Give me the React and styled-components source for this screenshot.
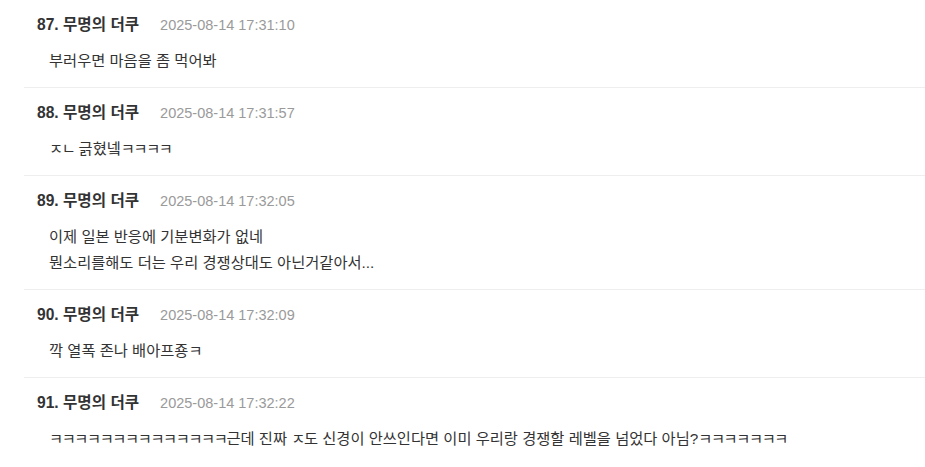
import React from "react";
import styled, { createGlobalStyle } from "styled-components";

const Global = createGlobalStyle`
  html, body { margin: 0; padding: 0; background: #ffffff; }
  body {
    font-family: "Liberation Sans", "Noto Sans CJK KR", sans-serif;
    color: #333333;
    -webkit-font-smoothing: antialiased;
  }
`;

const List = styled.ul`
  list-style: none;
  margin: 0 0 0 24px;
  padding: 0;
`;

const Item = styled.li`
  padding: 14px 0 13px 13px;
  border-top: 1px solid #eeeeee;
  &:first-child { border-top: none; }
`;

const Header = styled.div`
  display: flex;
  align-items: baseline;
  gap: 21px;
  height: 21px;
  line-height: 21px;
`;

const Author = styled.span`
  font-size: 15.6px;
  font-weight: 700;
  color: #333333;
`;

const Time = styled.span`
  font-size: 14.5px;
  color: #9a9a9a;
`;

const Body = styled.div`
  margin-top: 13px;
  padding-left: 12px;
  font-size: 15.3px;
  line-height: 26px;
  color: #333333;
  white-space: pre-line;
`;

const Jamo = styled.span`
  letter-spacing: -1.4px;
`;

const comments = [
  { no: 87, time: "2025-08-14 17:31:10", text: "부러우면 마음을 좀 먹어봐" },
  { no: 88, time: "2025-08-14 17:31:57", text: "ㅈㄴ 긁혔넼ㅋㅋㅋㅋ" },
  {
    no: 89,
    time: "2025-08-14 17:32:05",
    text: "이제 일본 반응에 기분변화가 없네\n뭔소리를해도 더는 우리 경쟁상대도 아닌거같아서...",
  },
  { no: 90, time: "2025-08-14 17:32:09", text: "깍 열폭 존나 배아프죵ㅋ" },
  {
    no: 91,
    time: "2025-08-14 17:32:22",
    text: "ㅋㅋㅋㅋㅋㅋㅋㅋㅋㅋㅋㅋㅋㅋ근데 진짜 ㅈ도 신경이 안쓰인다면 이미 우리랑 경쟁할 레벨을 넘었다 아님?ㅋㅋㅋㅋㅋㅋㅋ",
  },
];

function renderText(text) {
  return text.split(/([\u3131-\u318E]+)/).map((part, i) =>
    /^[\u3131-\u318E]+$/.test(part) ? <Jamo key={i}>{part}</Jamo> : part
  );
}

export default function App() {
  return (
    <>
      <Global />
      <List>
        {comments.map((c) => (
          <Item key={c.no}>
            <Header>
              <Author>{c.no}. 무명의 더쿠</Author>
              <Time>{c.time}</Time>
            </Header>
            <Body>{renderText(c.text)}</Body>
          </Item>
        ))}
      </List>
    </>
  );
}
